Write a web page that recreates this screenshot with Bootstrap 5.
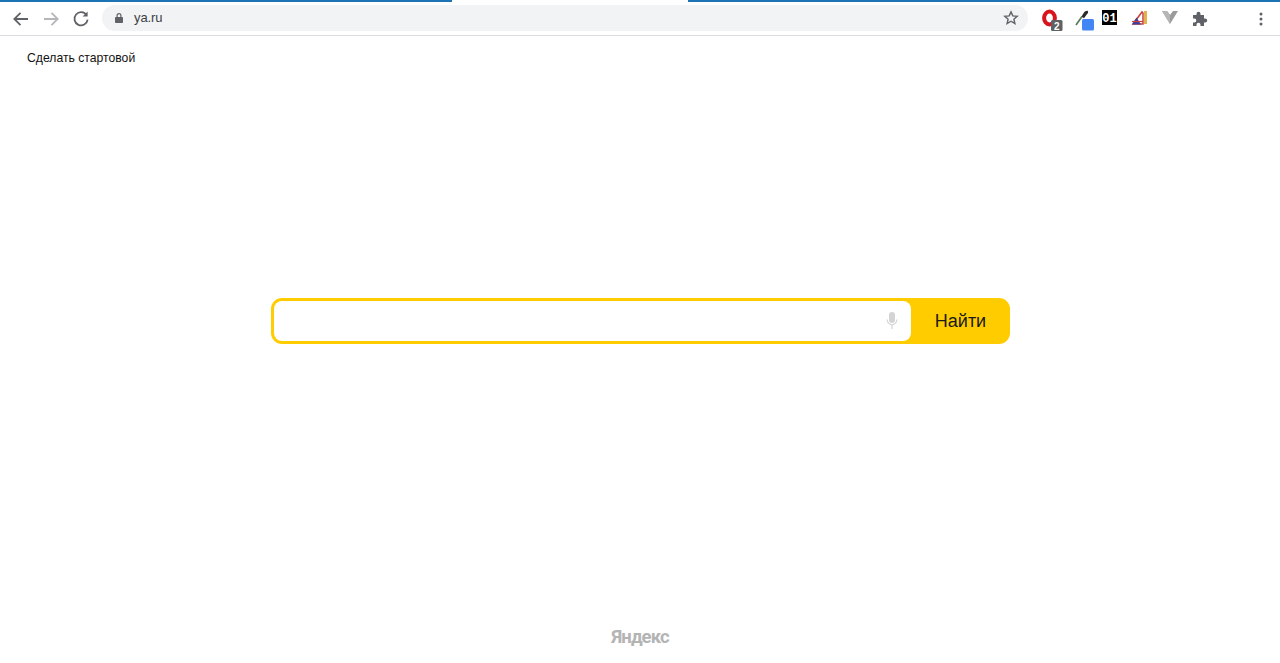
<!DOCTYPE html>
<html lang="ru">
<head>
<meta charset="utf-8">
<title>Яндекс</title>
<link href="https://cdn.jsdelivr.net/npm/bootstrap@5.3.0/dist/css/bootstrap.min.css" rel="stylesheet">
<style>
html,body{height:663px;overflow:hidden;background:#fff;font-family:"Liberation Sans",Arial,sans-serif;color:#000}
.tab-line{height:2px}
.tab-seg{background:#1c74b4}
.tab-seg-l{width:452px}
.tab-seg-r{width:592px}
.tab-gap{width:236px}
.chrome-bar{height:34px;border-bottom:1px solid #dadce0;padding-left:11px;padding-right:8px}
.nav-ico{width:20px;height:20px;flex:none}
.nav-gap{margin-right:10px}
.omni{width:926px;height:26px;margin-left:11px;margin-top:-2px;background:#f1f3f4;border-radius:13px;padding:0 9px 0 11px;font:13px "Liberation Sans",sans-serif;color:#5f6368;flex:none}
.omni-url{margin-left:9px;color:#3c4043;letter-spacing:-.1px}
.ext{width:22px;height:22px;flex:none;display:block;overflow:visible}
.ext-1{margin-left:12px}
.ext-2{margin-left:10px}
.ext-3{margin-left:5px}
.ext-4{margin-left:8px}
.ext-5{margin-left:8px}
.ext-6{margin-left:8px}
.ext-7{margin-left:auto}
.home-link{font-size:12.2px;line-height:16px;color:#111;text-decoration:none;margin:14px 0 0 27px;align-self:flex-start}
.search-wrap{width:739px;height:46px;margin:232px auto 0;background:#fc0;border:3px solid #fc0;border-radius:11px}
.search-field{width:637px;background:#fff;border-radius:8px;padding-right:12px}
.search-input{border:0;outline:0;background:none;min-width:0;padding:0 12px}
.search-btn{border:0;background:none;font-size:18px;line-height:1;color:#1a1a1a;padding:0 0 1px 4px}
.brand-foot{margin-top:auto;padding-bottom:15px;font-family:Roboto,"Liberation Sans",sans-serif;font-size:18.500px;line-height:22px;font-weight:700;color:#b4b4b4;letter-spacing:-.95px;text-align:center}
</style>
</head>
<body class="d-flex flex-column m-0">
<div class="tab-line d-flex">
  <div class="tab-seg tab-seg-l"></div><div class="tab-gap"></div><div class="tab-seg tab-seg-r"></div>
</div>
<header class="chrome-bar d-flex align-items-center">
  <svg class="nav-ico nav-gap" viewBox="0 0 20 20" fill="none" stroke="#5f6368" stroke-width="1.8"><path d="M17 10H3.500M9.500 3.800 3.300 10l6.200 6.200"/></svg>
  <svg class="nav-ico nav-gap" viewBox="0 0 20 20" fill="none" stroke="#b4b6b9" stroke-width="1.8"><path d="M3 10h13.500M10.500 3.800l6.200 6.200-6.200 6.200"/></svg>
  <svg class="nav-ico" viewBox="0 0 20 20" fill="none" stroke="#5f6368" stroke-width="1.8"><path d="M15.600 6.200A6.600 6.600 0 1 0 16.600 10.600"/><path d="M16.600 2.600v5h-5z" fill="#5f6368" stroke="none"/></svg>
  <div class="omni d-flex align-items-center">
    <svg width="12" height="12" viewBox="0 0 12 12" fill="#5f6368"><path d="M3.500 5V3.600a2.500 2.500 0 0 1 5 0V5h.7c.5 0 .8.4.8.8v4.400c0 .5-.3.8-.8.8H2.800c-.5 0-.8-.3-.8-.8V5.800C2 5.400 2.300 5 2.800 5zm1.200 0h2.600V3.600a1.300 1.300 0 0 0-2.600 0z"/></svg>
    <span class="omni-url">ya.ru</span>
    <svg class="ms-auto" width="16" height="16" viewBox="0 0 16 16" fill="none" stroke="#5f6368" stroke-width="1.400"><path d="M8 1.900l1.800 4 4.400.4-3.300 2.900 1 4.300L8 11.200l-3.900 2.300 1-4.300-3.300-2.900 4.400-.4z"/></svg>
  </div>
  <svg class="ext ext-1" viewBox="0 0 22 22">
    <ellipse cx="9.500" cy="10" rx="5.400" ry="6.400" fill="none" stroke="#d8141c" stroke-width="4"/>
    <rect x="11" y="12" width="11.500" height="11" rx="1.500" fill="#5f6163"/>
    <text x="16.700" y="21.500" text-anchor="middle" font-size="10" font-weight="700" fill="#fff" font-family="Liberation Sans">2</text>
  </svg>
  <svg class="ext ext-2" viewBox="0 0 22 22">
    <path d="M4 17 10 8.500" stroke="#5d7f60" stroke-width="1.800" fill="none"/>
    <path d="M9.500 8.500l2.500-4c1-1.500 3-2.300 3.800-1.400s.2 2.600-1.300 3.600l-2.500 3.500z" fill="#2a2a2a"/>
    <rect x="10" y="11" width="12" height="11.500" rx="1.500" fill="#4285f4"/>
  </svg>
  <svg class="ext ext-3" viewBox="0 0 22 22">
    <rect x="3" y="2" width="15" height="15" fill="#000"/>
    <text x="10.500" y="13.500" text-anchor="middle" font-size="12" font-weight="700" fill="#fff" font-family="Liberation Mono">01</text>
  </svg>
  <svg class="ext ext-4" viewBox="0 0 22 22">
    <path d="M15 3h3v13h-3z" fill="#e2b24c"/>
    <path d="M4 16 13 4l1 1v11z" fill="none" stroke="#c8413c" stroke-width="1.500"/>
    <path d="M3 16.500l4.500-7 4.500 7z" fill="#3b3f9e"/>
    <path d="M3 13.500h11" stroke="#c8413c" stroke-width="1.200"/>
  </svg>
  <svg class="ext ext-5" viewBox="0 0 22 22"><path d="M3 3h5l3 4 3-4h5l-8 13z" fill="#9a9b9d"/><path d="M8 3l3 4v9L3 3z" fill="#b5b6b7"/></svg>
  <svg class="ext ext-6" viewBox="0 0 22 22"><path d="M4 7h3.500V5.800a2 2 0 0 1 4 0V7H15v3.500h1.200a2 2 0 0 1 0 4H15V18h-3.500v-1.300a2 2 0 0 0-4 0V18H4v-3.500h1.300a2 2 0 0 0 0-4H4z" fill="#5f6368"/></svg>
  <svg class="ext ext-7" viewBox="0 0 22 22" fill="#5f6368"><circle cx="11" cy="6" r="1.500"/><circle cx="11" cy="11" r="1.500"/><circle cx="11" cy="16" r="1.500"/></svg>
</header>
<main class="d-flex flex-column flex-grow-1">
  <a class="home-link" href="#">Сделать стартовой</a>
  <form class="search-wrap d-flex">
    <div class="search-field d-flex align-items-center">
      <input class="search-input flex-grow-1" type="text" aria-label="Поиск">
      <svg width="14" height="20" viewBox="0 0 14 20" fill="#d4d4d4"><rect x="4" y="1" width="6" height="11" rx="3"/><path d="M1.500 8.500h1.200c0 2.600 1.800 4.700 4.300 4.700s4.300-2.100 4.300-4.700h1.200c0 3-2 5.300-4.900 5.800V18H6.400v-3.700c-2.900-.5-4.900-2.800-4.900-5.800z"/></svg>
    </div>
    <button class="search-btn flex-grow-1" type="button">Найти</button>
  </form>
  <footer class="brand-foot">Яндекс</footer>
</main>
<script src="https://cdn.jsdelivr.net/npm/bootstrap@5.3.0/dist/js/bootstrap.bundle.min.js"></script>
</body>
</html>
